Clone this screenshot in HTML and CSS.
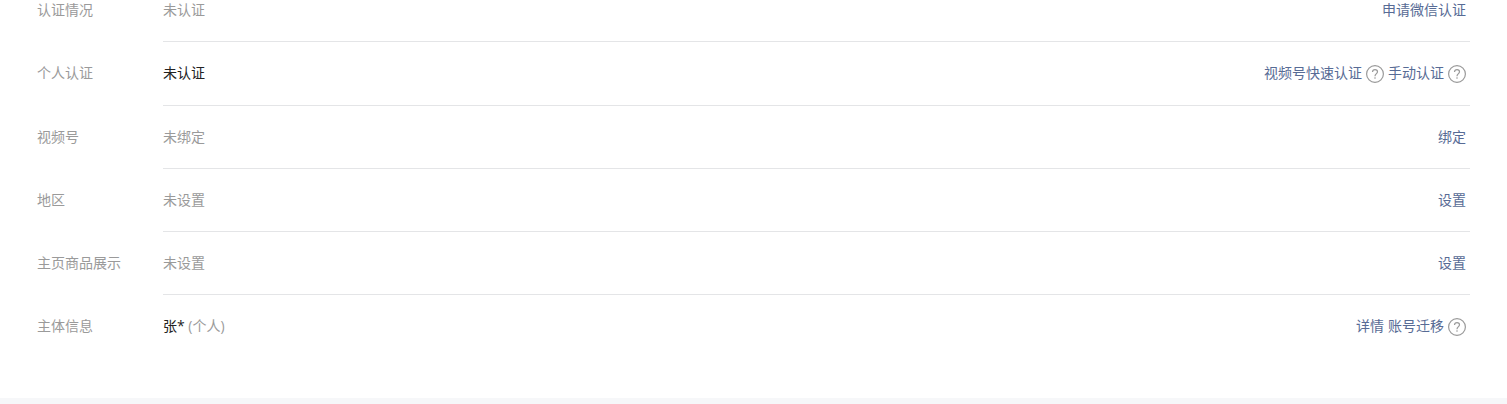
FILE: index.html
```html
<!DOCTYPE html>
<html lang="zh-CN">
<head>
<meta charset="utf-8">
<title>账号详情</title>
<link rel="stylesheet" href="styles.css">
</head>
<body>
<svg class="sprite" aria-hidden="true">
  <symbol id="help" viewBox="0 0 18 18">
    <circle cx="9" cy="9" r="8.4" fill="none" stroke="currentColor" stroke-width="1.2"/>
    <path d="M6.5 7.1C6.5 5.5 7.5 4.6 9 4.6s2.5.9 2.5 2.2c0 1-.6 1.5-1.3 2.1-.8.7-1.2 1.1-1.2 2.3" fill="none" stroke="currentColor" stroke-width="1.2"/>
    <circle cx="9" cy="13" r=".8" fill="currentColor"/>
  </symbol>
</svg>
<main class="panel">
  <section class="row">
    <h2 class="label">认证情况</h2>
    <div class="body"><p class="value">未认证</p><div class="actions"><a href="#">申请微信认证</a></div></div>
  </section>
  <section class="row">
    <h2 class="label">个人认证</h2>
    <div class="body"><p class="value"><span class="strong">未认证</span></p>
      <div class="actions">
        <span class="action"><a href="#">视频号快速认证</a><button class="help" aria-label="视频号快速认证说明"><svg><use href="#help"/></svg></button></span>
        <span class="action"><a href="#">手动认证</a><button class="help" aria-label="手动认证说明"><svg><use href="#help"/></svg></button></span>
      </div>
    </div>
  </section>
  <section class="row">
    <h2 class="label">视频号</h2>
    <div class="body"><p class="value">未绑定</p><div class="actions"><a href="#">绑定</a></div></div>
  </section>
  <section class="row">
    <h2 class="label">地区</h2>
    <div class="body"><p class="value">未设置</p><div class="actions"><a href="#">设置</a></div></div>
  </section>
  <section class="row">
    <h2 class="label">主页商品展示</h2>
    <div class="body"><p class="value">未设置</p><div class="actions"><a href="#">设置</a></div></div>
  </section>
  <section class="row">
    <h2 class="label">主体信息</h2>
    <div class="body"><p class="value"><span class="strong">张*</span> (个人)</p>
      <div class="actions">
        <a href="#">详情</a>
        <span class="action"><a href="#">账号迁移</a><button class="help" aria-label="账号迁移说明"><svg><use href="#help"/></svg></button></span>
      </div>
    </div>
  </section>
</main>
</body>
</html>
```
FILE: styles.css
```css
* {
  box-sizing: border-box;
}

body {
  margin: 0;
  background: #f6f7f9;
  color: #9a9a9a;
  font: 14px/20px "Open Sans", "Noto Sans CJK SC", sans-serif;
}

.sprite {
  display: none;
}

.panel {
  padding: 0 37px 40px;
  background: #fff;
}

.row {
  display: flex;
}

.label {
  flex: none;
  width: 126px;
  margin: 0;
  padding-top: 21px;
  font-size: 14px;
  font-weight: 400;
}

.body {
  flex: 1;
  display: flex;
  justify-content: space-between;
  padding: 21px 4px 21px 0;
  border-bottom: 1px solid #e4e5e7;
}

.row:first-child .label,
.row:first-child .body {
  padding-top: 0;
}

.row:last-child .body {
  border-bottom: 0;
}

.value {
  margin: 0;
}

.strong {
  color: #222;
}

.actions,
.action {
  display: flex;
  gap: 4px;
}

.actions a {
  color: #576b95;
  text-decoration: none;
}

.help {
  width: 18px;
  height: 18px;
  margin: 2px 0 1px;
  padding: 0;
  border: 0;
  background: none;
  color: #9a9a9a;
  cursor: pointer;
}

.help svg {
  display: block;
  width: 18px;
  height: 18px;
}
```
